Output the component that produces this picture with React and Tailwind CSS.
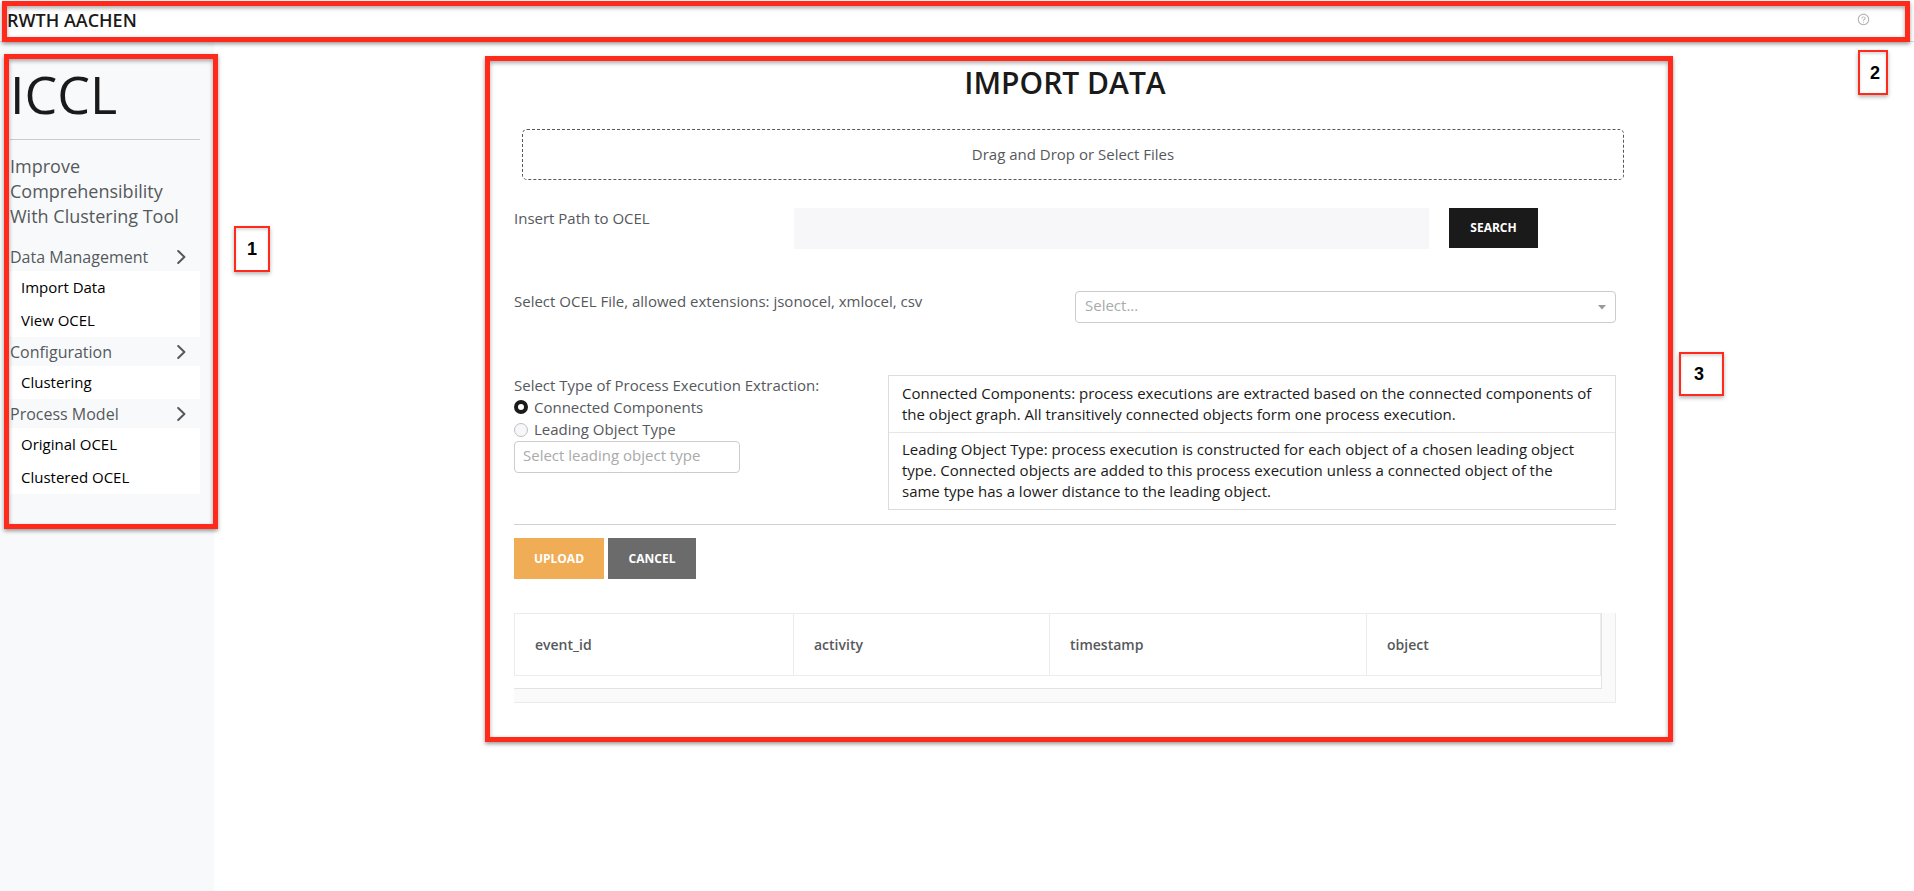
import React from "react";
import { AiOutlineQuestionCircle } from "react-icons/ai";

const menu = [
  { title: "Data Management", items: ["Import Data", "View OCEL"] },
  { title: "Configuration", items: ["Clustering"] },
  { title: "Process Model", items: ["Original OCEL", "Clustered OCEL"] },
];

function Chevron() {
  return (
    <svg width="9" height="14" viewBox="0 0 9 14" fill="none" stroke="#55595c" strokeWidth="2" aria-hidden="true">
      <path d="M1.2 1 7.4 7 1.2 13" strokeLinecap="round" strokeLinejoin="round" />
    </svg>
  );
}

function Frame({ className }) {
  return (
    <div
      aria-hidden="true"
      className={
        "pointer-events-none absolute border-[5px] border-[#ff2a1c] shadow-[0_2px_4px_rgba(0,0,0,0.4),inset_0_2px_4px_rgba(0,0,0,0.35)] " +
        className
      }
    />
  );
}

function Marker({ className, children }) {
  return (
    <div
      className={
        "absolute flex items-center border-2 border-[#ff2a1c] bg-white font-['Liberation_Sans',sans-serif] text-lg font-bold text-black shadow-[0_2px_4px_rgba(0,0,0,0.3),inset_0_2px_3px_rgba(0,0,0,0.15)] " +
        className
      }
    >
      {children}
    </div>
  );
}

function Sidebar() {
  return (
    <aside className="relative w-[214px] shrink-0 bg-[#f8f9fb] pl-[10px] pr-[14px] pt-3">
      <h1 className="border-b border-[#cbccce] pb-[5px] text-[52px] leading-[80px] text-[#1a1a1a]">ICCL</h1>
      <p className="mt-[14px] text-lg leading-[25px] text-[#55595c]">
        Improve
        <br />
        Comprehensibility
        <br />
        With Clustering Tool
      </p>
      <nav className="mt-[13px]">
        {menu.map((group) => (
          <section key={group.title}>
            <button type="button" className="flex h-[29px] w-full items-center justify-between pr-[14px] text-base text-[#55595c]">
              {group.title}
              <Chevron />
            </button>
            <ul className="bg-white text-[15px] text-black">
              {group.items.map((item) => (
                <li key={item}>
                  <a href="#" className="flex h-[33px] items-center pl-[11px]">
                    {item}
                  </a>
                </li>
              ))}
            </ul>
          </section>
        ))}
      </nav>
      <Frame className="left-1 right-[-4px] top-3 h-[475px]" />
      <Marker className="left-[234px] top-[184px] h-[46px] w-9 justify-center">1</Marker>
    </aside>
  );
}

function Content() {
  return (
    <main className="relative mx-auto mt-[14px] h-fit w-[1188px] pb-[39px] pl-[29px] pr-[57px]">
      <h2 className="pt-1 text-center text-[30px] font-semibold leading-[46px] text-[#1a1a1a]">IMPORT DATA</h2>
      <button
        type="button"
        className="ml-2 mt-[23px] block h-[51px] w-full rounded-[5px] border border-dashed border-[#55595c] text-center"
      >
        Drag and Drop or Select Files
      </button>

      <div className="mt-7 flex h-[83px] items-start">
        <label htmlFor="path" className="w-[280px] leading-[21px]">
          Insert Path to OCEL
        </label>
        <input id="path" type="text" className="h-[41px] w-[635px] bg-[#f7f7f9] px-5" />
        <button type="button" className="ml-5 h-10 w-[89px] bg-[#1a1a1a] text-xs font-bold text-white">
          SEARCH
        </button>
      </div>

      <div className="flex h-[84px] items-start">
        <label htmlFor="file" className="w-[561px] leading-[21px]">
          Select OCEL File, allowed extensions: jsonocel, xmlocel, csv
        </label>
        <div className="relative flex-1">
          <select
            id="file"
            className="h-8 w-full appearance-none rounded border border-[#cccccc] bg-white pb-1 pl-[9px] text-[#aaaaaa]"
          >
            <option>Select...</option>
          </select>
          <svg className="absolute right-[10px] top-[14px]" width="8" height="5" viewBox="0 0 8 5" aria-hidden="true">
            <path d="M0 0h8L4 4.6z" fill="#999999" />
          </svg>
        </div>
      </div>

      <div className="flex justify-between border-b border-[#d1d1d1] pb-[14px]">
        <fieldset className="w-[340px]">
          <legend className="leading-[21px]">Select Type of Process Execution Extraction:</legend>
          <label className="flex h-[22px] items-center gap-[6px]">
            <input
              type="radio"
              name="extraction"
              defaultChecked
              className="size-[14px] appearance-none rounded-full border border-[#c0c0c2] bg-[#f7f7f9] checked:border-4 checked:border-[#1a1a1a] checked:bg-white"
            />
            Connected Components
          </label>
          <label className="flex h-[23px] items-center gap-[6px]">
            <input
              type="radio"
              name="extraction"
              className="size-[14px] appearance-none rounded-full border border-[#c0c0c2] bg-[#f7f7f9] checked:border-4 checked:border-[#1a1a1a] checked:bg-white"
            />
            Leading Object Type
          </label>
          <input
            type="text"
            aria-label="Leading object type"
            placeholder="Select leading object type"
            className="block h-8 w-[226px] rounded border border-[#cccccc] pb-1 pl-2 placeholder:text-[#aaaaaa]"
          />
        </fieldset>
        <div className="w-[728px] border border-[#dcdcdc] leading-[21px] text-[#1a1a1a]">
          <p className="border-b border-[#e6e6e6] py-[7px] pl-[13px] pr-2">
            Connected Components: process executions are extracted based on the connected components of
            <br />
            the object graph. All transitively connected objects form one process execution.
          </p>
          <p className="pb-[7px] pl-[13px] pr-2 pt-[6px]">
            Leading Object Type: process execution is constructed for each object of a chosen leading object
            <br />
            type. Connected objects are added to this process execution unless a connected object of the
            <br />
            same type has a lower distance to the leading object.
          </p>
        </div>
      </div>

      <div className="mt-[13px] flex gap-1 text-xs font-bold text-white">
        <button type="button" className="h-[41px] w-[90px] bg-[#f0ad55]">
          UPLOAD
        </button>
        <button type="button" className="h-[41px] w-[88px] bg-[#6b6b6b]">
          CANCEL
        </button>
      </div>

      <div className="mt-[34px] border-b border-r border-[#ebebeb] bg-[#fafafa] pb-[13px] pr-[13px]">
        <div className="border-b border-r border-[#e3e3e3] bg-white pb-3">
          <table className="w-full table-fixed border-collapse">
            <thead>
              <tr className="h-[62px] text-left text-sm">
                <th className="w-[279px] border border-[#ececec] pl-5 font-semibold">event_id</th>
                <th className="w-[256px] border border-[#ececec] pl-5 font-semibold">activity</th>
                <th className="w-[317px] border border-[#ececec] pl-5 font-semibold">timestamp</th>
                <th className="border border-[#ececec] pl-5 font-semibold">object</th>
              </tr>
            </thead>
          </table>
        </div>
      </div>

      <Frame className="inset-0" />
      <Marker className="left-[1194px] top-[296px] h-11 w-[45px] pl-[13px]">3</Marker>
    </main>
  );
}

export default function App() {
  return (
    <div className="flex min-h-screen flex-col bg-white font-['Open_Sans','Noto_Sans',sans-serif] text-[15px] text-[#55595c]">
      <header className="relative z-10 flex h-[42px] items-center justify-between border-b border-[#dddddd] bg-white pb-[2px] pl-[7px] pr-11">
        <a href="#" className="text-lg font-semibold text-[#1a1a1a]">
          RWTH AACHEN
        </a>
        <button type="button" aria-label="Help" className="text-[#aaaaaa]">
          <AiOutlineQuestionCircle size={13} />
        </button>
        <Frame className="bottom-[-1px] left-[2px] right-1 top-[1px]" />
        <Marker className="right-[26px] top-[50px] h-[45px] w-[30px] justify-end pr-[6px]">2</Marker>
      </header>
      <div className="flex flex-1">
        <Sidebar />
        <div className="flex flex-1 pl-[30px]">
          <Content />
        </div>
      </div>
    </div>
  );
}
